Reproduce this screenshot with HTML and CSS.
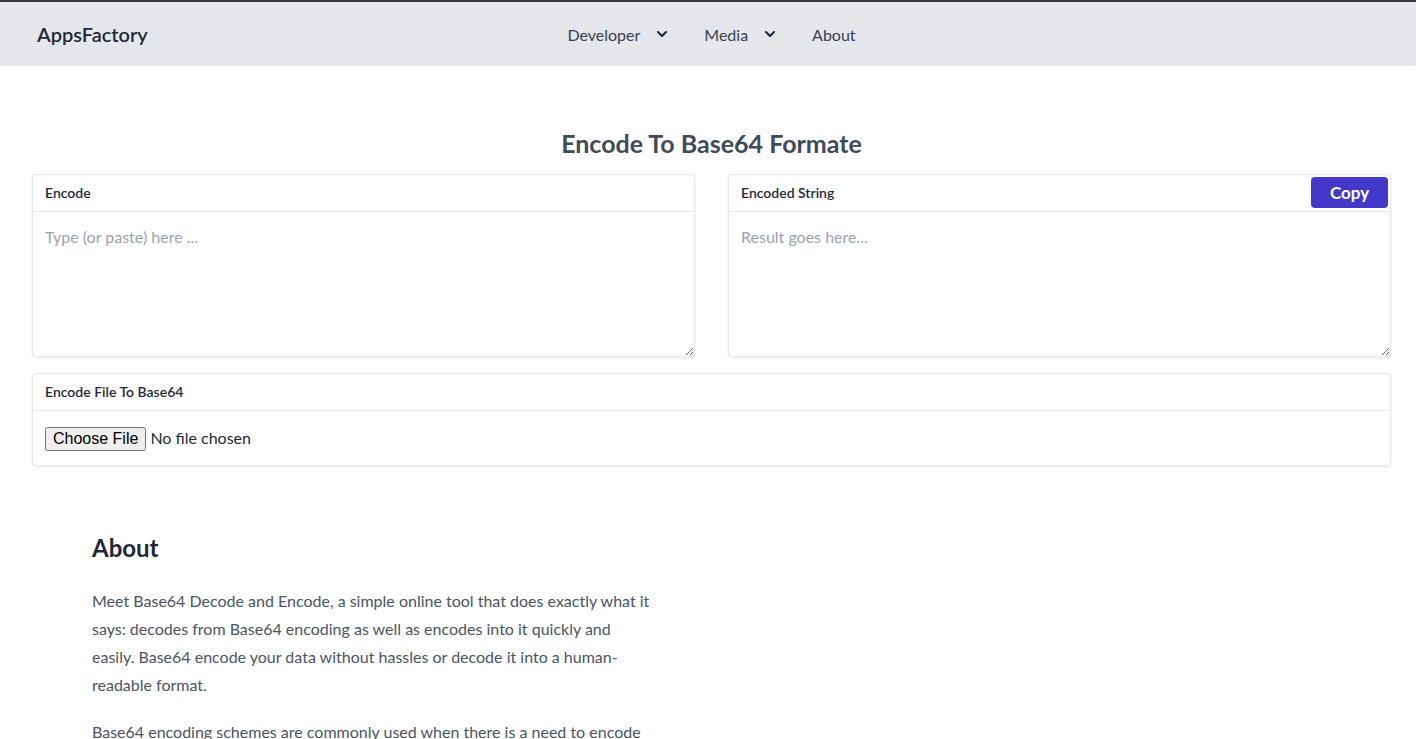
FILE: index.html
```html
<!DOCTYPE html>
<html lang="en">
<head>
<meta charset="utf-8">
<title>AppsFactory - Encode To Base64</title>
<link rel="stylesheet" href="styles.css">
</head>
<body>
<header class="topbar">
  <a class="brand" href="#">AppsFactory</a>
  <nav class="menu">
    <a class="menu-item" href="#">Developer
      <svg class="chev" viewBox="0 0 10 6" width="10" height="6"><path d="M1 1l4 4 4-4" fill="none" stroke="currentColor" stroke-width="2" stroke-linecap="round" stroke-linejoin="round"/></svg>
    </a>
    <a class="menu-item" href="#">Media
      <svg class="chev" viewBox="0 0 10 6" width="10" height="6"><path d="M1 1l4 4 4-4" fill="none" stroke="currentColor" stroke-width="2" stroke-linecap="round" stroke-linejoin="round"/></svg>
    </a>
    <a class="menu-item" href="#">About</a>
  </nav>
  <div class="spacer"></div>
</header>

<main class="main">
  <h1 class="title">Encode To Base64 Formate</h1>
  <div class="pair">
    <section class="card">
      <div class="card-head"><span>Encode</span></div>
      <textarea class="area" placeholder="Type (or paste) here ..."></textarea>
    </section>
    <section class="card">
      <div class="card-head"><span>Encoded String</span><button class="copy">Copy</button></div>
      <textarea class="area" placeholder="Result goes here..."></textarea>
    </section>
  </div>
  <section class="card file-card">
    <div class="card-head"><span>Encode File To Base64</span></div>
    <div class="file-body"><input type="file" class="file"></div>
  </section>

  <article class="about">
    <h2 class="about-title">About</h2>
    <p>Meet Base64 Decode and Encode, a simple online tool that does exactly what it says: decodes from Base64 encoding as well as encodes into it quickly and easily. Base64 encode your data without hassles or decode it into a human-readable format.</p>
    <p>Base64 encoding schemes are commonly used when there is a need to encode binary data that needs to be stored and transferred over media that are designed to deal with textual data.</p>
  </article>
</main>
</body>
</html>
```

FILE: styles.css
```css
* { box-sizing: border-box; }
html, body { margin: 0; padding: 0; }
body {
  font-family: Lato, "Open Sans", "Noto Sans", sans-serif;
  color: #1f2937;
  background: #fff;
  border-top: 2px solid #3b3b3b;
}
a { text-decoration: none; color: inherit; }

.topbar {
  height: 64px;
  background: #e5e7eb;
  display: grid;
  grid-template-columns: 1fr auto 1fr;
  align-items: center;
  padding: 0 37px;
}
.brand {
  font-size: 20px;
  font-weight: 600;
  color: #1f2937;
}
.menu {
  display: flex;
  gap: 37px;
  align-items: center;
  font-size: 16px;
  color: #374151;
  margin-left: 7px;
}
.menu-item {
  display: flex;
  align-items: center;
  gap: 17px;
}
.chev { color: #1f2937; }

.main {
  padding: 0 25px 0 32px;
}
.title {
  margin: 61px 0 15px;
  text-align: center;
  font-size: 25px;
  line-height: 32px;
  font-weight: 700;
  color: #414a57;
}
.pair {
  display: grid;
  grid-template-columns: 1fr 1fr;
  gap: 33px;
}
.card {
  border: 1px solid #e5e7eb;
  border-radius: 4px;
  background: #fff;
  box-shadow: 0 1px 3px rgba(0,0,0,0.08);
  display: flex;
  flex-direction: column;
}
.card-head {
  height: 37px;
  border-bottom: 1px solid #e5e7eb;
  display: flex;
  align-items: center;
  justify-content: space-between;
  padding: 0 2px 1px 12px;
  font-size: 14px;
  font-weight: 600;
  color: #1f2937;
}
.copy {
  border: 0;
  background: #4338ca;
  color: #fff;
  font-family: inherit;
  font-size: 17px;
  font-weight: 700;
  width: 77px;
  height: 31px;
  border-radius: 4px;
}
.area {
  display: block;
  width: 100%;
  height: 144px;
  border: 0;
  outline: none;
  padding: 13px 12px;
  font-family: inherit;
  font-size: 16px;
  line-height: 24px;
  color: #1f2937;
  resize: vertical;
  background: transparent;
}
.area::placeholder { color: #9ca3af; }

.file-card { margin-top: 16px; }
.file-body {
  height: 54px;
  display: flex;
  align-items: center;
  padding: 1px 12px 0;
}
.file {
  font-family: inherit;
  font-size: 16px;
  color: #1f2937;
}

.about {
  width: 620px;
  padding: 0 0 0 60px;
  margin-top: 66px;
}
.about-title {
  font-size: 24px;
  line-height: 32px;
  font-weight: 700;
  color: #1f2937;
  margin: 0 0 23px;
}
.about p {
  margin: 0 0 19px;
  font-size: 16px;
  line-height: 28px;
  color: #4b5563;
}
```
